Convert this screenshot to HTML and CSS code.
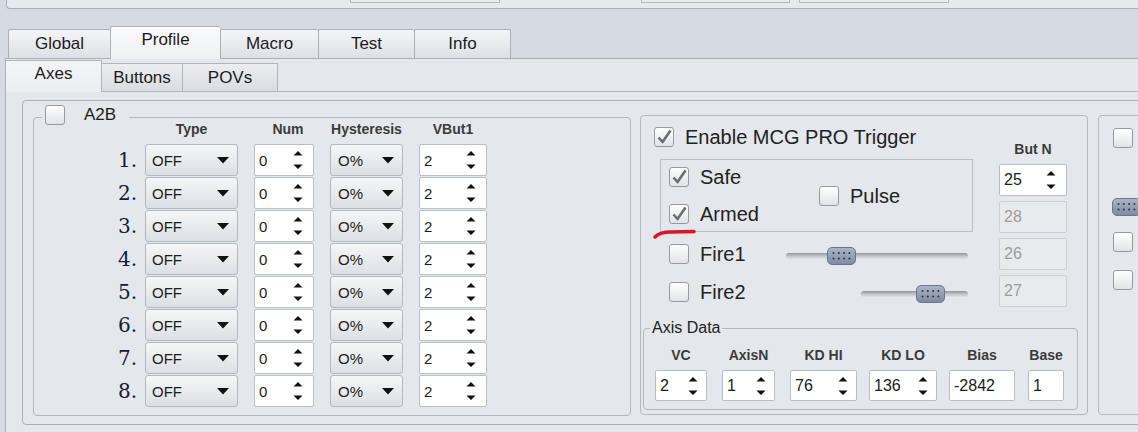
FILE: index.html
```html
<!DOCTYPE html>
<html lang="en">
<head>
<meta charset="utf-8">
<title>Profile - Axes</title>
<link rel="stylesheet" href="styles.css">
</head>
<body>
<div class="app">
  <div class="topstrip"><span class="tb tb1"></span><span class="tb tb2"></span><span class="tb tb3"></span></div>
  <div class="tabbar">
    <div class="tab t-global">Global</div>
    <div class="tab t-profile active">Profile</div>
    <div class="tab t-macro">Macro</div>
    <div class="tab t-test">Test</div>
    <div class="tab t-info">Info</div>
  </div>
  <div class="pane">
    <div class="subtabbar">
      <div class="subtab s-axes active">Axes</div>
      <div class="subtab s-buttons">Buttons</div>
      <div class="subtab s-povs">POVs</div>
      <div class="subfill"></div>
    </div>
    <div class="subpane">
      <div class="inner">

        <div class="group a2b">
          <div class="gtitle a2b-title"><span class="cb"></span><span class="a2b-label">A2B</span></div>
          <div class="a2b-head">
            <span></span><span>Type</span><span>Num</span><span>Hysteresis</span><span>VBut1</span>
          </div>
          <div class="a2b-grid">
            <div class="rnum">1.</div>
            <div class="combo ctype"><span>OFF</span><svg class="dd" viewBox="0 0 12 7"><path d="M0 0H12L6 6.5Z"/></svg></div>
            <div class="spin"><span>0</span><svg class="sa" viewBox="0 0 10 20"><path d="M0.5 5.5L5 1 9.5 5.5ZM0.5 14.5H9.5L5 19Z"/></svg></div>
            <div class="combo chys"><span>O%</span><svg class="dd" viewBox="0 0 12 7"><path d="M0 0H12L6 6.5Z"/></svg></div>
            <div class="spin"><span>2</span><svg class="sa" viewBox="0 0 10 20"><path d="M0.5 5.5L5 1 9.5 5.5ZM0.5 14.5H9.5L5 19Z"/></svg></div>

            <div class="rnum">2.</div>
            <div class="combo ctype"><span>OFF</span><svg class="dd" viewBox="0 0 12 7"><path d="M0 0H12L6 6.5Z"/></svg></div>
            <div class="spin"><span>0</span><svg class="sa" viewBox="0 0 10 20"><path d="M0.5 5.5L5 1 9.5 5.5ZM0.5 14.5H9.5L5 19Z"/></svg></div>
            <div class="combo chys"><span>O%</span><svg class="dd" viewBox="0 0 12 7"><path d="M0 0H12L6 6.5Z"/></svg></div>
            <div class="spin"><span>2</span><svg class="sa" viewBox="0 0 10 20"><path d="M0.5 5.5L5 1 9.5 5.5ZM0.5 14.5H9.5L5 19Z"/></svg></div>

            <div class="rnum">3.</div>
            <div class="combo ctype"><span>OFF</span><svg class="dd" viewBox="0 0 12 7"><path d="M0 0H12L6 6.5Z"/></svg></div>
            <div class="spin"><span>0</span><svg class="sa" viewBox="0 0 10 20"><path d="M0.5 5.5L5 1 9.5 5.5ZM0.5 14.5H9.5L5 19Z"/></svg></div>
            <div class="combo chys"><span>O%</span><svg class="dd" viewBox="0 0 12 7"><path d="M0 0H12L6 6.5Z"/></svg></div>
            <div class="spin"><span>2</span><svg class="sa" viewBox="0 0 10 20"><path d="M0.5 5.5L5 1 9.5 5.5ZM0.5 14.5H9.5L5 19Z"/></svg></div>

            <div class="rnum">4.</div>
            <div class="combo ctype"><span>OFF</span><svg class="dd" viewBox="0 0 12 7"><path d="M0 0H12L6 6.5Z"/></svg></div>
            <div class="spin"><span>0</span><svg class="sa" viewBox="0 0 10 20"><path d="M0.5 5.5L5 1 9.5 5.5ZM0.5 14.5H9.5L5 19Z"/></svg></div>
            <div class="combo chys"><span>O%</span><svg class="dd" viewBox="0 0 12 7"><path d="M0 0H12L6 6.5Z"/></svg></div>
            <div class="spin"><span>2</span><svg class="sa" viewBox="0 0 10 20"><path d="M0.5 5.5L5 1 9.5 5.5ZM0.5 14.5H9.5L5 19Z"/></svg></div>

            <div class="rnum">5.</div>
            <div class="combo ctype"><span>OFF</span><svg class="dd" viewBox="0 0 12 7"><path d="M0 0H12L6 6.5Z"/></svg></div>
            <div class="spin"><span>0</span><svg class="sa" viewBox="0 0 10 20"><path d="M0.5 5.5L5 1 9.5 5.5ZM0.5 14.5H9.5L5 19Z"/></svg></div>
            <div class="combo chys"><span>O%</span><svg class="dd" viewBox="0 0 12 7"><path d="M0 0H12L6 6.5Z"/></svg></div>
            <div class="spin"><span>2</span><svg class="sa" viewBox="0 0 10 20"><path d="M0.5 5.5L5 1 9.5 5.5ZM0.5 14.5H9.5L5 19Z"/></svg></div>

            <div class="rnum">6.</div>
            <div class="combo ctype"><span>OFF</span><svg class="dd" viewBox="0 0 12 7"><path d="M0 0H12L6 6.5Z"/></svg></div>
            <div class="spin"><span>0</span><svg class="sa" viewBox="0 0 10 20"><path d="M0.5 5.5L5 1 9.5 5.5ZM0.5 14.5H9.5L5 19Z"/></svg></div>
            <div class="combo chys"><span>O%</span><svg class="dd" viewBox="0 0 12 7"><path d="M0 0H12L6 6.5Z"/></svg></div>
            <div class="spin"><span>2</span><svg class="sa" viewBox="0 0 10 20"><path d="M0.5 5.5L5 1 9.5 5.5ZM0.5 14.5H9.5L5 19Z"/></svg></div>

            <div class="rnum">7.</div>
            <div class="combo ctype"><span>OFF</span><svg class="dd" viewBox="0 0 12 7"><path d="M0 0H12L6 6.5Z"/></svg></div>
            <div class="spin"><span>0</span><svg class="sa" viewBox="0 0 10 20"><path d="M0.5 5.5L5 1 9.5 5.5ZM0.5 14.5H9.5L5 19Z"/></svg></div>
            <div class="combo chys"><span>O%</span><svg class="dd" viewBox="0 0 12 7"><path d="M0 0H12L6 6.5Z"/></svg></div>
            <div class="spin"><span>2</span><svg class="sa" viewBox="0 0 10 20"><path d="M0.5 5.5L5 1 9.5 5.5ZM0.5 14.5H9.5L5 19Z"/></svg></div>

            <div class="rnum">8.</div>
            <div class="combo ctype"><span>OFF</span><svg class="dd" viewBox="0 0 12 7"><path d="M0 0H12L6 6.5Z"/></svg></div>
            <div class="spin"><span>0</span><svg class="sa" viewBox="0 0 10 20"><path d="M0.5 5.5L5 1 9.5 5.5ZM0.5 14.5H9.5L5 19Z"/></svg></div>
            <div class="combo chys"><span>O%</span><svg class="dd" viewBox="0 0 12 7"><path d="M0 0H12L6 6.5Z"/></svg></div>
            <div class="spin"><span>2</span><svg class="sa" viewBox="0 0 10 20"><path d="M0.5 5.5L5 1 9.5 5.5ZM0.5 14.5H9.5L5 19Z"/></svg></div>
          </div>
        </div>

        <div class="group mcg">
          <div class="mcg-top">
            <div class="mcg-left">
              <div class="cbrow enable">
                <span class="cb on"><svg viewBox="0 0 18 18"><path d="M3.5 9.5L7.5 14 15.5 2.5"/></svg></span>
                <span class="lbl">Enable MCG PRO Trigger</span>
              </div>
              <div class="safebox">
                <div class="safecol">
                  <div class="cbrow">
                    <span class="cb on"><svg viewBox="0 0 18 18"><path d="M3.5 9.5L7.5 14 15.5 2.5"/></svg></span>
                    <span class="lbl">Safe</span>
                  </div>
                  <div class="cbrow armed">
                    <span class="cb on"><svg viewBox="0 0 18 18"><path d="M3.5 9.5L7.5 14 15.5 2.5"/></svg></span>
                    <span class="lbl">Armed</span>
                  </div>
                </div>
                <div class="cbrow pulse">
                  <span class="cb"></span>
                  <span class="lbl">Pulse</span>
                </div>
              </div>
              <div class="cbrow fire fire1">
                <span class="cb"></span>
                <span class="lbl">Fire1</span>
                <div class="slider sl1"><div class="thumb"><svg viewBox="0 0 27 16"><g><circle cx="5.5" cy="5" r="1"/><circle cx="10.8" cy="5" r="1"/><circle cx="16.1" cy="5" r="1"/><circle cx="21.4" cy="5" r="1"/><circle cx="5.5" cy="10.5" r="1"/><circle cx="10.8" cy="10.5" r="1"/><circle cx="16.1" cy="10.5" r="1"/><circle cx="21.4" cy="10.5" r="1"/></g></svg></div></div>
              </div>
              <div class="cbrow fire fire2">
                <span class="cb"></span>
                <span class="lbl">Fire2</span>
                <div class="slider sl2"><div class="thumb"><svg viewBox="0 0 27 16"><g><circle cx="5.5" cy="5" r="1"/><circle cx="10.8" cy="5" r="1"/><circle cx="16.1" cy="5" r="1"/><circle cx="21.4" cy="5" r="1"/><circle cx="5.5" cy="10.5" r="1"/><circle cx="10.8" cy="10.5" r="1"/><circle cx="16.1" cy="10.5" r="1"/><circle cx="21.4" cy="10.5" r="1"/></g></svg></div></div>
              </div>
            </div>
            <div class="mcg-right">
              <div class="hdr butn">But N</div>
              <div class="spin big"><span>25</span><svg class="sa" viewBox="0 0 10 20"><path d="M0.5 5.5L5 1 9.5 5.5ZM0.5 14.5H9.5L5 19Z"/></svg></div>
              <div class="field dis"><span>28</span></div>
              <div class="field dis"><span>26</span></div>
              <div class="field dis"><span>27</span></div>
            </div>
          </div>
          <div class="axisbox">
            <div class="gtitle axis-title">Axis Data</div>
            <div class="axisrow">
              <div class="acol c-vc"><div class="hdr">VC</div><div class="spin big"><span>2</span><svg class="sa" viewBox="0 0 10 20"><path d="M0.5 5.5L5 1 9.5 5.5ZM0.5 14.5H9.5L5 19Z"/></svg></div></div>
              <div class="acol c-axisn"><div class="hdr">AxisN</div><div class="spin big"><span>1</span><svg class="sa" viewBox="0 0 10 20"><path d="M0.5 5.5L5 1 9.5 5.5ZM0.5 14.5H9.5L5 19Z"/></svg></div></div>
              <div class="acol c-kdhi"><div class="hdr">KD HI</div><div class="spin big"><span>76</span><svg class="sa" viewBox="0 0 10 20"><path d="M0.5 5.5L5 1 9.5 5.5ZM0.5 14.5H9.5L5 19Z"/></svg></div></div>
              <div class="acol c-kdlo"><div class="hdr">KD LO</div><div class="spin big"><span>136</span><svg class="sa" viewBox="0 0 10 20"><path d="M0.5 5.5L5 1 9.5 5.5ZM0.5 14.5H9.5L5 19Z"/></svg></div></div>
              <div class="acol c-bias"><div class="hdr">Bias</div><div class="field"><span>-2842</span></div></div>
              <div class="acol c-base"><div class="hdr">Base</div><div class="field"><span>1</span></div></div>
            </div>
          </div>
        </div>

        <div class="group extra">
          <span class="cb"></span>
          <div class="thumb xthumb"><svg viewBox="0 0 27 16"><g><circle cx="5.5" cy="5" r="1"/><circle cx="10.8" cy="5" r="1"/><circle cx="16.1" cy="5" r="1"/><circle cx="21.4" cy="5" r="1"/><circle cx="5.5" cy="10.5" r="1"/><circle cx="10.8" cy="10.5" r="1"/><circle cx="16.1" cy="10.5" r="1"/><circle cx="21.4" cy="10.5" r="1"/></g></svg></div>
          <span class="cb x2"></span>
          <span class="cb x3"></span>
        </div>

      </div>
    </div>
  </div>
  <svg class="redmark" viewBox="0 0 48 12"><path d="M3 9 Q8 4 18 4 L42 3.5"/></svg>
</div>
</body>
</html>
```
FILE: styles.css
```css
* { box-sizing: border-box; }
html, body { margin: 0; padding: 0; }
body {
  width: 1138px; height: 432px; overflow: hidden;
  background: #d6dae2;
  font-family: "Liberation Sans", Arial, sans-serif;
  color: #1c1c1c;
}
.app { position: relative; width: 1138px; height: 432px; overflow: hidden; }

/* top strip (bottom of a toolbar above) */
.topstrip {
  height: 9px; margin-left: 6px;
  background: #e6e9ed;
  border-left: 1px solid #aab0b8; border-bottom: 1px solid #aab0b8;
  border-bottom-left-radius: 4px;
  display: flex; align-items: flex-start;
}
.tb { height: 3px; border: 1px solid #b4b9c1; border-top: 0; background: #e9ecef; }
.tb1 { margin-left: 343px; width: 150px; }
.tb2 { margin-left: 141px; width: 149px; }
.tb3 { margin-left: 9px; width: 150px; }

/* main tabs */
.tabbar { height: 49px; display: flex; align-items: flex-end; padding-left: 8px; }
.tab {
  height: 29px;
  border: 1px solid #aab0b8; border-bottom: 0; border-right: 0;
  border-radius: 2px 2px 0 0;
  background: linear-gradient(#f4f5f7, #dde0e5);
  font-size: 17px; line-height: 20px;
  display: flex; align-items: center; justify-content: center;
}
.tab.active {
  height: 33px; margin-bottom: -1px; padding-bottom: 6px;
  background: linear-gradient(#fbfbfc, #eef0f3);
  position: relative; z-index: 1;
}
.t-global { width: 102px; }
.t-profile { width: 110px; }
.t-macro { width: 98px; }
.t-test { width: 96px; }
.t-info { width: 97px; border-right: 1px solid #aab0b8; }

/* main pane */
.pane {
  margin-left: 5px; height: 374px;
  border-left: 1px solid #aab0b8; border-top: 1px solid #aab0b8;
  background: #e4e7eb;
}
.subtabbar { display: flex; align-items: flex-end; height: 33px; }
.subtab {
  height: 29px;
  border: 1px solid #b0b5bd; border-left: 0;
  background: linear-gradient(#eceef1, #d9dce1);
  font-size: 17px; line-height: 20px;
  display: flex; align-items: center; justify-content: center;
}
.subtab.active {
  height: 32px; border-bottom: 0; padding-bottom: 6px;
  background: linear-gradient(#f3f4f6, #eceef1);
}
.s-axes { width: 96px; }
.s-buttons { width: 81px; }
.s-povs { width: 95px; }
.subfill { flex: 1; border-bottom: 1px solid #b0b5bd; }
.subpane { padding-top: 8px; }

.inner {
  margin-left: 16px; width: 1200px; height: 325px;
  border: 1px solid #aab0b8; border-radius: 4px;
  padding: 14px 0 0 10px;
  display: flex; align-items: flex-start;
}

/* group boxes */
.group { border: 1px solid #b3b8c0; border-radius: 4px; flex: none; }
.gtitle { background: #e4e7eb; width: max-content; }

/* checkbox */
.cb {
  width: 20px; height: 20px; flex: none;
  border: 1px solid #959ba4; border-radius: 3px;
  background: linear-gradient(#ffffff, #e0e3e8);
  display: flex; align-items: center; justify-content: center;
}
.cb svg { width: 18px; height: 18px; }
.cb svg path { fill: none; stroke: #6a6d72; stroke-width: 2.6; stroke-linejoin: round; }

/* A2B */
.a2b { margin-top: 2px; width: 598px; height: 299px; }
.a2b-title {
  display: flex; align-items: center; height: 20px;
  margin: -13px 0 0 8px; padding: 0 13px 0 3px;
}
.a2b-label { margin-left: 19px; font-size: 17px; line-height: 20px; }
.a2b-head, .a2b-grid {
  display: grid;
  grid-template-columns: 95px 93px 60px 73px 68px;
  column-gap: 16px;
}
.a2b-head {
  margin-top: -4px; height: 16px; margin-bottom: 7px;
  font-size: 14px; line-height: 16px; font-weight: bold; color: #3b3b3b;
  text-align: center;
}
.a2b-head span:nth-child(3) { padding-left: 8px; }
.a2b-grid { grid-auto-rows: 32px; row-gap: 1px; }
.rnum {
  text-align: right; margin-right: -8px;
  font-family: "DejaVu Serif", "Liberation Serif", serif;
  font-size: 20px; line-height: 32px; color: #141d36;
}

.combo {
  height: 32px; display: flex; align-items: center; justify-content: space-between;
  border: 1px solid #b3b8c0; border-radius: 3px;
  background: linear-gradient(#f5f6f8, #dcdfe4);
  font-size: 15px; padding: 0 8px 0 6px;
}
.chys { padding-left: 7px; }
.dd { width: 12px; height: 7px; fill: #111; }

.spin, .field {
  height: 32px; display: flex; align-items: center; justify-content: space-between;
  border: 1px solid #b9bec6; border-radius: 2px;
  background: #ffffff;
  font-size: 15px; padding: 0 10px 0 4px;
}
.sa { width: 10px; height: 20px; fill: #111; }
.big { font-size: 16px; }
.field { font-size: 16px; }
.field.dis { background: #e8ebee; border-color: #ccd0d5; color: #9c9c9c; }

/* MCG group */
.mcg { margin-left: 9px; width: 448px; height: 300px; padding: 10px 0 0 13px; }
.mcg-top { display: flex; align-items: flex-start; }
.mcg-left { width: 345px; }
.cbrow { display: flex; align-items: center; height: 21px; }
.lbl { margin-left: 11px; font-size: 20px; line-height: 22px; color: #222; }
.safebox {
  margin: 12px 0 0 6px; width: 313px; height: 73px;
  border: 1px solid #b9bec6;
  padding: 6px 0 0 8px;
  display: flex;
}
.safecol { width: 150px; }
.armed { margin-top: 16px; }
.pulse { align-self: center; margin-top: -5px; }
.fire { margin-left: 15px; }
.fire1 { margin-top: 11px; }
.fire2 { margin-top: 17px; }
.slider {
  position: relative; height: 18px;
  margin-left: auto; margin-right: 31px; margin-top: 5px;
  display: flex; align-items: center;
}
.slider::before {
  content: ""; position: absolute; left: 0; right: 0; top: 6px; height: 6px;
  border-radius: 3px;
  background: linear-gradient(#8f949d, #c4c8ce 55%, #dfe2e6);
}
.sl1 { width: 182px; }
.sl1 .thumb { margin-left: 41px; }
.sl2 { width: 107px; }
.sl2 .thumb { margin-left: 55px; }
.thumb {
  position: relative; width: 29px; height: 18px; flex: none;
  border: 1px solid #69758a; border-radius: 5px;
  background: linear-gradient(#aab4c5, #7f8ba1);
}
.thumb svg { display: block; width: 27px; height: 16px; fill: #2c3444; }

.mcg-right { width: 68px; }
.hdr {
  font-size: 14px; line-height: 16px; height: 16px; font-weight: bold; color: #3b3b3b;
  text-align: center; white-space: nowrap;
}
.butn { margin-top: 15px; margin-bottom: 7px; }
.mcg-right .spin, .mcg-right .field { height: 32px; margin-bottom: 5px; padding-right: 10px; }

.axisbox {
  margin: 16px 0 0 -11px; width: 435px; height: 82px;
  border: 1px solid #b3b8c0; border-radius: 4px;
}
.axis-title {
  margin: -10px 0 0 6px; padding: 0 2px;
  font-size: 16px; line-height: 18px; height: 18px; color: #222;
}
.axisrow { display: flex; padding-left: 11px; margin-top: 10px; }
.acol .hdr { margin-bottom: 7px; }
.acol .spin, .acol .field { height: 31px; padding-right: 8px; }
.c-vc { width: 52px; }
.c-axisn { width: 53px; margin-left: 15px; }
.c-kdhi { width: 67px; margin-left: 15px; }
.c-kdlo { width: 68px; margin-left: 12px; }
.c-bias { width: 66px; margin-left: 12px; }
.c-base { width: 36px; margin-left: 13px; }

/* right, cut-off group */
.extra {
  margin-left: 10px; width: 100px; height: 300px;
  padding: 12px 0 0 14px;
  display: flex; flex-direction: column; align-items: flex-start;
}
.xthumb { margin: 50px 0 0 -1px; }
.x2 { margin-top: 16px; }
.x3 { margin-top: 18px; }

/* red hand-drawn annotation over the screenshot */
.redmark {
  position: absolute; left: 652px; top: 228px; width: 48px; height: 12px;
  fill: none; stroke: #e0141e; stroke-width: 3.5; stroke-linecap: round;
}
```
